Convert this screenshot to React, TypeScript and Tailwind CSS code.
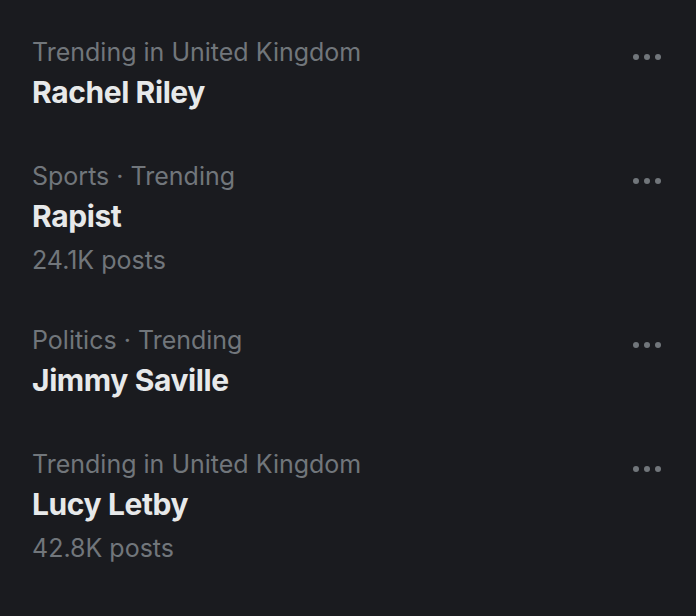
import React from 'react';

const trends = [
  { id: 1, context: "Trending in United Kingdom", name: "Rachel Riley", posts: null },
  { id: 2, context: "Sports · Trending", name: "Rapist", posts: "24.1K posts" },
  { id: 3, context: "Politics · Trending", name: "Jimmy Saville", posts: null },
  { id: 4, context: "Trending in United Kingdom", name: "Lucy Letby", posts: "42.8K posts" },
];

function MoreDots() {
  return (
    <div className="flex items-center gap-[5px] h-[40px] mt-[5px]">
      <span className="w-[6px] h-[6px] rounded-full bg-[#71767b]" />
      <span className="w-[6px] h-[6px] rounded-full bg-[#71767b]" />
      <span className="w-[6px] h-[6px] rounded-full bg-[#71767b]" />
    </div>
  );
}

export default function App() {
  return (
    <div className="w-[696px] h-[616px] bg-[#1a1b1f] font-['Inter',sans-serif] pt-[10px] overflow-hidden">
      {trends.map((t) => (
        <div key={t.id} className="flex justify-between items-start pl-[32px] pr-[35px] py-[22px]">
          <div className="flex flex-col">
            <div className="text-[#71767b] text-[25px] leading-[40px]">{t.context}</div>
            <div className="text-[#e7e9ea] text-[30px] leading-[40px] font-bold tracking-[-0.4px]">{t.name}</div>
            {t.posts && (
              <div className="text-[#71767b] text-[25px] leading-[32px] mt-[8px]">{t.posts}</div>
            )}
          </div>
          <MoreDots />
        </div>
      ))}
    </div>
  );
}
